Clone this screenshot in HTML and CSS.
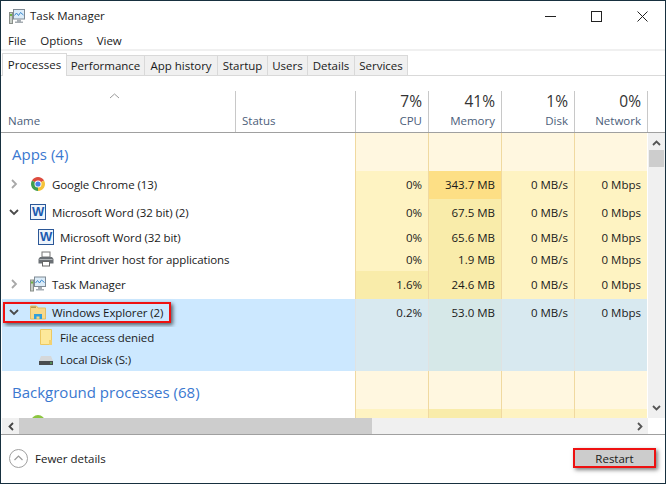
FILE: index.html
```html
<!DOCTYPE html>
<html lang="en">
<head>
    <meta charset="UTF-8">
    <title>Task Manager</title>
    <link rel="stylesheet" href="styles.css">
</head>
<body>
    <svg class="sprites">
        <symbol id="taskmgr" viewBox="0 0 16 15">
            <rect x="0.5" y="3.5" width="3" height="11" fill="#c8cfc8" stroke="#8a8f8a"/>
            <rect x="1" y="5" width="2" height="2" fill="#6cb33f"/>
            <rect x="4.5" y="0.5" width="11" height="9.5" fill="#dcecf8" stroke="#7f8a94"/>
            <path d="M5.5 6.5 L7.5 4 L9.5 6.5 L11.5 3.5 L14.5 6" fill="none" stroke="#3b8ad0"/>
            <path d="M8 10.5h4v2h2v1.5H6V12.500h2z" fill="#a6adb3"/>
        </symbol>
        <symbol id="chevron-right" viewBox="0 0 10 10">
            <path d="M3 1 L7 5 L3 9" fill="none" stroke="#a8a8a8" stroke-width="1.800"/>
        </symbol>
        <symbol id="chevron-down" viewBox="0 0 10 10">
            <path d="M1 3 L5 7 L9 3" fill="none" stroke="#4a4a4a" stroke-width="1.800"/>
        </symbol>
    </svg>

    <div class="window">
        <div class="titlebar">
            <svg class="title-icon"><use href="#taskmgr"/></svg>
            <span class="title-text">Task Manager</span>
            <div class="window-controls">
                <svg width="11" height="11" viewBox="0 0 11 11"><path d="M0 5.500h11" stroke="#222"/></svg>
                <svg width="11" height="11" viewBox="0 0 11 11"><rect x="0.500" y="0.500" width="10" height="10" fill="none" stroke="#222"/></svg>
                <svg width="11" height="11" viewBox="0 0 11 11"><path d="M0.500 0.500l10 10M10.500 0.500l-10 10" stroke="#222"/></svg>
            </div>
        </div>

        <div class="menu">
            <span>File</span>
            <span>Options</span>
            <span>View</span>
        </div>

        <div class="tabs">
            <div class="tab active">Processes</div>
            <div class="tab">Performance</div>
            <div class="tab">App history</div>
            <div class="tab">Startup</div>
            <div class="tab">Users</div>
            <div class="tab">Details</div>
            <div class="tab">Services</div>
        </div>

        <div class="table-head">
            <div class="head-col head-name">
                <svg class="sort-arrow" width="11" height="6" viewBox="0 0 11 6"><path d="M1 5 L5.500 1 L10 5" fill="none" stroke="#9a9a9a"/></svg>
                <span class="head-label">Name</span>
            </div>
            <div class="head-col"><span class="head-label">Status</span></div>
            <div class="head-col head-num"><span class="head-pct">7%</span><span class="head-label">CPU</span></div>
            <div class="head-col head-num"><span class="head-pct">41%</span><span class="head-label">Memory</span></div>
            <div class="head-col head-num"><span class="head-pct">1%</span><span class="head-label">Disk</span></div>
            <div class="head-col head-num head-last"><span class="head-pct">0%</span><span class="head-label">Network</span></div>
        </div>

        <div class="table-body">
            <div class="rows">
                <div class="row group">
                    <div class="name">Apps (4)</div><div class="status"></div>
                    <div class="cell"></div><div class="cell"></div><div class="cell"></div><div class="cell"></div>
                </div>

                <div class="row">
                    <div class="name">
                        <svg class="chevron"><use href="#chevron-right"/></svg>
                        <svg class="icon" viewBox="0 0 16 16">
                            <path d="M8 8L1.940 4.500A7 7 0 0 1 14.060 4.500Z" fill="#dd4b3e"/>
                            <path d="M8 8L14.060 4.500A7 7 0 0 1 8 15Z" fill="#f5c33b"/>
                            <path d="M8 8L8 15A7 7 0 0 1 1.940 4.500Z" fill="#3f9e4d"/>
                            <circle cx="8" cy="8" r="3.500" fill="#fff"/>
                            <circle cx="8" cy="8" r="2.600" fill="#4a80e8"/>
                        </svg>
                        Google Chrome (13)
                    </div>
                    <div class="status"></div>
                    <div class="cell">0%</div><div class="cell hot">343.7 MB</div><div class="cell">0 MB/s</div><div class="cell">0 Mbps</div>
                </div>

                <div class="row">
                    <div class="name">
                        <svg class="chevron"><use href="#chevron-down"/></svg>
                        <span class="icon word-icon">W</span>
                        Microsoft Word (32 bit) (2)
                    </div>
                    <div class="status"></div>
                    <div class="cell">0%</div><div class="cell warm">67.5 MB</div><div class="cell">0 MB/s</div><div class="cell">0 Mbps</div>
                </div>

                <div class="row child">
                    <div class="name">
                        <span class="icon word-icon">W</span>
                        Microsoft Word (32 bit)
                    </div>
                    <div class="status"></div>
                    <div class="cell">0%</div><div class="cell warm">65.6 MB</div><div class="cell">0 MB/s</div><div class="cell">0 Mbps</div>
                </div>

                <div class="row child">
                    <div class="name">
                        <svg class="icon" viewBox="0 0 16 16">
                            <rect x="4" y="1" width="8" height="5" fill="#fff" stroke="#777"/>
                            <path d="M2 6h12l1.500 2v4.500h-15V8z" fill="#6b7075"/>
                            <rect x="1.500" y="8" width="13" height="1" fill="#b4b8bb"/>
                            <rect x="4.500" y="10.500" width="7" height="4.500" fill="#fff" stroke="#666"/>
                        </svg>
                        Print driver host for applications
                    </div>
                    <div class="status"></div>
                    <div class="cell">0%</div><div class="cell warm">1.9 MB</div><div class="cell">0 MB/s</div><div class="cell">0 Mbps</div>
                </div>

                <div class="row">
                    <div class="name">
                        <svg class="chevron"><use href="#chevron-right"/></svg>
                        <svg class="icon"><use href="#taskmgr"/></svg>
                        Task Manager
                    </div>
                    <div class="status"></div>
                    <div class="cell warm">1.6%</div><div class="cell warm">24.6 MB</div><div class="cell">0 MB/s</div><div class="cell">0 Mbps</div>
                </div>

                <div class="row selected">
                    <div class="name">
                        <svg class="chevron"><use href="#chevron-down"/></svg>
                        <svg class="icon" viewBox="0 0 16 16">
                            <path d="M0.500 2h6l1.500 2h7.500v11H0.500z" fill="#f6d98a" stroke="#e3bd62"/>
                            <rect x="1" y="2.500" width="5" height="1.500" fill="#b59a52"/>
                            <path d="M4 15v-5h8v5h-2.500v-2.500h-3V15z" fill="#2f9fdc"/>
                        </svg>
                        Windows Explorer (2)
                    </div>
                    <div class="status"></div>
                    <div class="cell">0.2%</div><div class="cell warm">53.0 MB</div><div class="cell">0 MB/s</div><div class="cell">0 Mbps</div>
                    <div class="callout"></div>
                </div>

                <div class="row child selected">
                    <div class="name">
                        <svg class="icon" viewBox="0 0 16 16">
                            <path d="M2.500 0.500h11v15h-11z" fill="#fde89a" stroke="#ecc862"/>
                            <rect x="11" y="11" width="3" height="5" fill="#f3d170"/>
                        </svg>
                        File access denied
                    </div>
                    <div class="status"></div>
                    <div class="cell"></div><div class="cell warm"></div><div class="cell"></div><div class="cell"></div>
                </div>

                <div class="row child selected">
                    <div class="name">
                        <svg class="icon" viewBox="0 0 16 16">
                            <path d="M3 5h10l2 5H1z" fill="#d5d8da"/>
                            <rect x="1" y="10" width="14" height="4" fill="#4a4d50"/>
                            <rect x="12" y="11.500" width="2" height="1" fill="#5fd35f"/>
                        </svg>
                        Local Disk (S:)
                    </div>
                    <div class="status"></div>
                    <div class="cell"></div><div class="cell warm"></div><div class="cell"></div><div class="cell"></div>
                </div>

                <div class="row group">
                    <div class="name">Background processes (68)</div><div class="status"></div>
                    <div class="cell"></div><div class="cell"></div><div class="cell"></div><div class="cell"></div>
                </div>

                <div class="row">
                    <div class="name">
                        <span class="chevron"></span>
                        <svg class="icon" viewBox="0 0 16 16"><circle cx="8" cy="8" r="7" fill="#8cc63f"/></svg>
                    </div>
                    <div class="status"></div>
                    <div class="cell"></div><div class="cell warm"></div><div class="cell"></div><div class="cell"></div>
                </div>
            </div>

            <div class="vscroll">
                <svg width="9" height="6" viewBox="0 0 9 6"><path d="M1 5 L4.500 1.500 L8 5" fill="none" stroke="#555" stroke-width="1.800"/></svg>
                <div class="vthumb"></div>
                <svg class="vdown" width="9" height="6" viewBox="0 0 9 6"><path d="M1 1 L4.500 4.500 L8 1" fill="none" stroke="#555" stroke-width="1.800"/></svg>
            </div>
        </div>

        <div class="hscroll">
            <div class="hbutton">
                <svg width="6" height="9" viewBox="0 0 6 9"><path d="M5 1 L1.500 4.500 L5 8" fill="none" stroke="#444" stroke-width="1.800"/></svg>
            </div>
            <div class="hthumb"></div>
            <div class="htrack">
                <svg width="6" height="9" viewBox="0 0 6 9"><path d="M1 1 L4.500 4.500 L1 8" fill="none" stroke="#555" stroke-width="1.800"/></svg>
            </div>
        </div>

        <div class="footer">
            <span class="fewer-icon">
                <svg width="9" height="6" viewBox="0 0 9 6"><path d="M0.500 5 L4.500 1 L8.500 5" fill="none" stroke="#9a9a9a" stroke-width="1.200"/></svg>
            </span>
            <span class="fewer-text">Fewer details</span>
            <button class="restart">Restart</button>
        </div>
    </div>
</body>
</html>
```

FILE: styles.css
```css
body {
    margin: 0;
    font-family: "Open Sans", "Noto Sans", sans-serif;
    font-size: 11.5px;
    color: #1a1a1a;
    background-color: #fff;
}
.sprites {
    display: none;
}
.window {
    width: 666px;
    height: 484px;
    box-sizing: border-box;
    border: 1px solid #17303f;
    display: flex;
    flex-direction: column;
    overflow: hidden;
}

/* title + menu */
.titlebar {
    height: 30px;
    display: flex;
    align-items: center;
    padding-left: 8px;
}
.title-icon {
    width: 16px;
    height: 15px;
    margin-right: 5px;
}
.title-text {
    margin-bottom: 2px;
}
.window-controls {
    margin-left: auto;
    margin-right: 17px;
    display: flex;
    gap: 35px;
}
.menu {
    height: 18px;
    line-height: 20px;
    padding-left: 7px;
    display: flex;
    gap: 14px;
}

/* tabs */
.tabs {
    height: 27px;
    box-sizing: border-box;
    border-top: 2px solid #f0f0f0;
    border-bottom: 1px solid #d9d9d9;
    padding-left: 1px;
    display: grid;
    grid-template-columns: 65px 78px 73px 50px 40px 47px 53px;
    justify-content: start;
    align-items: end;
}
.tab {
    height: 20px;
    line-height: 20px;
    text-align: center;
    background-color: #f0f0f0;
    border-right: 1px solid #d9d9d9;
    border-top: 1px solid #d9d9d9;
    box-sizing: border-box;
}
.tab.active {
    height: 23px;
    margin-bottom: -1px;
    background-color: #fff;
    border: 1px solid #d9d9d9;
    border-bottom: none;
    line-height: 21px;
}

/* table header */
.table-head {
    height: 57px;
    box-sizing: border-box;
    border-bottom: 1px solid #a0a0a0;
    padding: 15px 0 0 1px;
    display: grid;
    grid-template-columns: 233px 120px repeat(4, 73px) 1px;
}
.head-col {
    border-left: 1px solid #c8c8c8;
    display: flex;
    flex-direction: column;
    justify-content: flex-end;
    padding: 0 6px 4px;
    min-width: 0;
}
.head-name {
    border-left: none;
    position: relative;
}
.sort-arrow {
    position: absolute;
    left: 107px;
    top: 2px;
}
.head-num {
    align-items: flex-end;
}
.head-last {
    border-right: 1px solid #c8c8c8;
    margin-right: -1px;
}
.head-pct {
    font-size: 15.5px;
    line-height: 20px;
    margin-bottom: 2px;
    color: #333;
}
.head-label {
    line-height: 15px;
    color: #4c607a;
}

/* table body */
.table-body {
    height: 285px;
    display: flex;
    padding-left: 1px;
    overflow: hidden;
}
.rows {
    width: 646px;
}
.row {
    position: relative;
    height: 28px;
    display: grid;
    grid-template-columns: 233px 120px repeat(4, 73px);
}
.row.child {
    height: 22px;
}
.row.group {
    height: 38px;
}
.name {
    display: flex;
    align-items: center;
    padding: 0 0 2px 7px;
    box-sizing: border-box;
    white-space: nowrap;
    letter-spacing: -0.1px;
}
.child .name {
    padding-left: 36px;
}
.group .name {
    padding: 4px 0 0 10px;
    font-size: 15px;
    letter-spacing: 0;
    color: #3a78d0;
}
.chevron {
    width: 10px;
    height: 10px;
    margin-right: 11px;
}
span.chevron {
    display: block;
}
.icon {
    width: 16px;
    height: 16px;
    margin-right: 6px;
    flex: none;
}
.word-icon {
    box-sizing: border-box;
    border: 1px solid #2b5797;
    background-color: #eef4fb;
    color: #1c5bb0;
    font-family: "Liberation Sans", sans-serif;
    font-size: 13px;
    font-weight: bold;
    line-height: 14px;
    text-align: center;
}
.cell {
    border-left: 1px solid #f0d9a0;
    background-color: #fef3c2;
    text-align: right;
    padding-right: 6px;
    line-height: 27px;
}
.child .cell {
    line-height: 21px;
}
.cell.warm {
    background-color: #f9ecaa;
}
.cell.hot {
    background-color: #fddf85;
}
.group .cell {
    background-color: #fff7e0;
}
.selected .name,
.selected .status {
    background-color: #cce8ff;
}
.selected .cell {
    background-color: #d8e9f0;
    border-left-color: #dfe3e3;
}
.selected .cell.warm {
    background-color: #d6e8e8;
}
.callout {
    position: absolute;
    left: 1px;
    top: 3px;
    width: 168px;
    height: 21px;
    box-sizing: border-box;
    border: 2px solid #ee1111;
    box-shadow: 2px 2px 4px rgba(0, 0, 0, 0.6);
}

/* scrollbars */
.vscroll {
    width: 17px;
    background-color: #f0f0f0;
    display: flex;
    flex-direction: column;
    align-items: center;
    padding-top: 7px;
    box-sizing: border-box;
}
.vthumb {
    width: 15px;
    height: 17px;
    margin-top: 4px;
    background-color: #cdcdcd;
}
.vdown {
    margin-top: auto;
    margin-bottom: 7px;
}
.hscroll {
    height: 16px;
    margin-left: 1px;
    width: 646px;
    display: flex;
}
.hbutton {
    width: 17px;
    background-color: #f0f0f0;
    display: flex;
    align-items: center;
    justify-content: center;
}
.hthumb {
    width: 353px;
    background-color: #cdcdcd;
}
.htrack {
    flex: 1;
    background-color: #f0f0f0;
    display: flex;
    align-items: center;
    justify-content: flex-end;
    padding-right: 5px;
}

/* footer */
.footer {
    flex: 1;
    border-top: 1px solid #a0a0a0;
    display: flex;
    align-items: center;
    padding: 0 9px 2px 8px;
}
.fewer-icon {
    width: 19px;
    height: 19px;
    box-sizing: border-box;
    border: 1px solid #a0a0a0;
    border-radius: 50%;
    display: flex;
    align-items: center;
    justify-content: center;
    margin-right: 7px;
}
.restart {
    margin-left: auto;
    width: 83px;
    height: 20px;
    padding: 0;
    border: 2px solid #ee1111;
    background-color: #ccc;
    box-shadow: 2px 2px 4px rgba(0, 0, 0, 0.5);
    font: inherit;
    color: #1a1a1a;
}
```
